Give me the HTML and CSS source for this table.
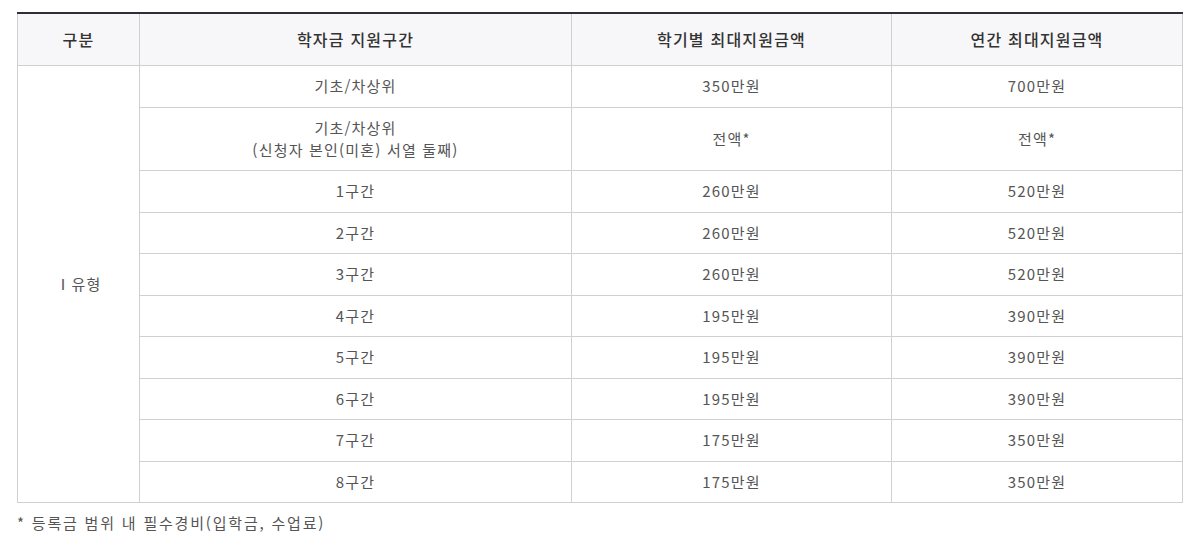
FILE: index.html
```html
<!DOCTYPE html>
<html lang="ko">
<head>
<meta charset="utf-8">
<link rel="stylesheet" href="styles.css">
</head>
<body>
<div class="wrap">
  <table class="tbl">
    <colgroup>
      <col class="c1"><col class="c2"><col class="c3"><col class="c4">
    </colgroup>
    <thead>
      <tr><th>구분</th><th>학자금 지원구간</th><th>학기별 최대지원금액</th><th>연간 최대지원금액</th></tr>
    </thead>
    <tbody>
      <tr><td rowspan="10">Ⅰ유형</td><td>기초/차상위</td><td>350만원</td><td>700만원</td></tr>
      <tr><td>기초/차상위<br>(신청자 본인(미혼) 서열 둘째)</td><td>전액*</td><td>전액*</td></tr>
      <tr><td>1구간</td><td>260만원</td><td>520만원</td></tr>
      <tr><td>2구간</td><td>260만원</td><td>520만원</td></tr>
      <tr><td>3구간</td><td>260만원</td><td>520만원</td></tr>
      <tr><td>4구간</td><td>195만원</td><td>390만원</td></tr>
      <tr><td>5구간</td><td>195만원</td><td>390만원</td></tr>
      <tr><td>6구간</td><td>195만원</td><td>390만원</td></tr>
      <tr><td>7구간</td><td>175만원</td><td>350만원</td></tr>
      <tr><td>8구간</td><td>175만원</td><td>350만원</td></tr>
    </tbody>
  </table>
  <p class="note">* 등록금 범위 내 필수경비(입학금, 수업료)</p>
</div>
</body>
</html>
```
FILE: styles.css
```css
html, body { margin: 0; padding: 0; background: #fff; }
body {
  font-family: "Noto Sans CJK KR", "Noto Sans", sans-serif;
  color: #555;
  font-size: 15px;
}
.wrap { padding: 12px 9px 0 17px; }
.tbl {
  width: 1165px;
  border-collapse: collapse;
  table-layout: fixed;
  border-top: 2px solid #2e3035;
}
.c1 { width: 122px; }
.c2 { width: 432px; }
.c3 { width: 320px; }
.c4 { width: 291px; }
.tbl th, .tbl td {
  border: 1px solid #d0d0d0;
  text-align: center;
  vertical-align: middle;
}
.tbl th {
  background: #f7f7f9;
  color: #333;
  font-size: 16px;
  font-weight: 500;
  line-height: 24px;
  padding: 13px 10px 14px;
  border-top: none;
  letter-spacing: 1.2px;
}
.tbl td {
  line-height: 22px;
  padding: 9.25px 10px;
  font-weight: 400;
  letter-spacing: 1.2px;
}
.note {
  margin: 9px 0 0;
  line-height: 22px;
  font-size: 15px;
  color: #555;
  letter-spacing: 1.8px;
}
```
